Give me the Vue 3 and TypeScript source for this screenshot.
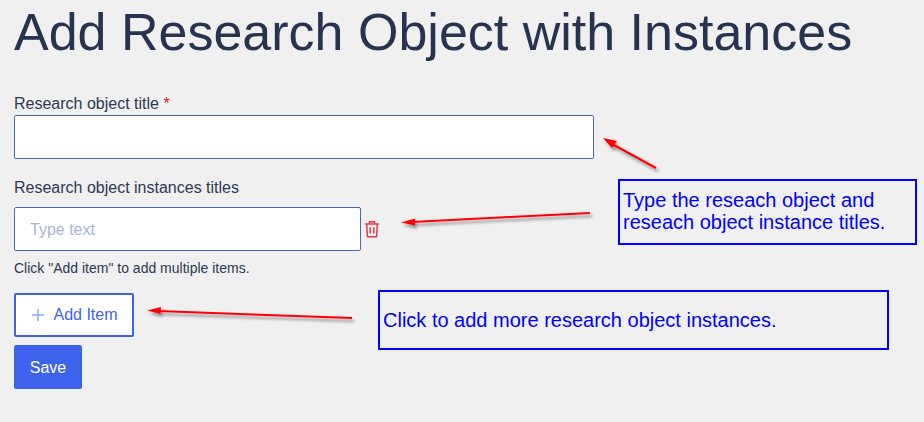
<script setup lang="ts">
const arrows = [
  { id: 1, d: 'M656 168 L612 144', head: '603,138 617,141 612,148' },
  { id: 2, d: 'M590 213 L412 222', head: '401,222.5 415,218.5 415,225.5' },
  { id: 3, d: 'M352 318 L158 311', head: '147,310.5 161,307 160.5,314' },
]
</script>

<template>
  <main class="page">
    <h1 class="title">Add Research Object with Instances</h1>
    <form class="form" @submit.prevent>
      <label class="label first" for="ro-title">Research object title <span class="req">*</span></label>
      <input id="ro-title" class="input wide" type="text" />
      <label class="label second" for="ro-inst">Research object instances titles</label>
      <div class="row">
        <input id="ro-inst" class="input narrow" type="text" placeholder="Type text" />
        <button class="trash" type="button" aria-label="Delete item">
          <svg width="16" height="18" viewBox="0 0 16 18" fill="none" stroke="#e0344a" stroke-width="1.4">
            <path d="M1 4H15" />
            <path d="M5.5 4V1.7H10.5V4" />
            <path d="M2.7 4L3.4 16.8H12.6L13.3 4" />
            <path d="M6.2 7.2V13.6M9.8 7.2V13.6" />
          </svg>
        </button>
      </div>
      <p class="help">Click "Add item" to add multiple items.</p>
      <button class="add" type="button">
        <svg class="plus" width="14" height="14" viewBox="0 0 14 14" stroke="#8ea5f5" stroke-width="1.4">
          <path d="M7 1V13M1 7H13" />
        </svg>
        <span>Add Item</span>
      </button>
      <button class="save" type="submit">Save</button>
    </form>

    <svg class="arrows" width="924" height="422" viewBox="0 0 924 422" aria-hidden="true">
      <defs>
        <filter id="shade" x="-20%" y="-50%" width="140%" height="200%">
          <feDropShadow dx="2" dy="3" stdDeviation="1.5" flood-color="#000" flood-opacity="0.4" />
        </filter>
      </defs>
      <g v-for="a in arrows" :key="a.id" filter="url(#shade)">
        <path :d="a.d" stroke="#ff0000" stroke-width="2" fill="none" />
        <polygon :points="a.head" fill="#ff0000" />
      </g>
    </svg>

    <div class="note note-a">Type the reseach object and<br />reseach object instance titles.</div>
    <div class="note note-b">Click to add more research object instances.</div>
  </main>
</template>

<style scoped>
.page {
  position: relative;
  box-sizing: border-box;
  width: 924px;
  height: 422px;
  overflow: hidden;
  padding: 0 0 0 14px;
  background: #f0f0f0;
  font-family: "Liberation Sans", Arial, sans-serif;
  color: #2a3650;
}
.title {
  margin: 0;
  padding-top: 4px;
  font-size: 52px;
  line-height: 56px;
  font-weight: 400;
  color: #27334f;
}
.form {
  display: flex;
  flex-direction: column;
  align-items: flex-start;
  margin-top: 35px;
}
.label {
  display: block;
  font-size: 16px;
  line-height: 18px;
  color: #2d3850;
}
.second {
  margin-top: 20px;
  margin-bottom: 10px;
}
.first {
  margin-bottom: 2px;
}
.req {
  color: #e0152c;
}
.input {
  box-sizing: border-box;
  height: 44px;
  padding: 2px 15px 0;
  border: 1px solid #4a69ad;
  border-radius: 2px;
  background: #fff;
  font: 16px "Liberation Sans", Arial, sans-serif;
  outline: none;
}
.input::placeholder {
  color: #a8b5d6;
  opacity: 1;
}
.wide {
  width: 580px;
}
.narrow {
  width: 347px;
}
.row {
  display: flex;
  align-items: center;
}
.trash {
  display: flex;
  margin: 0 0 0 3px;
  padding: 0;
  border: 0;
  background: none;
}
.help {
  margin: 9px 0 0;
  font-size: 14px;
  line-height: 16px;
  color: #2d3850;
}
.add {
  box-sizing: border-box;
  display: flex;
  align-items: center;
  justify-content: center;
  gap: 8px;
  width: 120px;
  height: 44px;
  margin-top: 17px;
  padding: 0 0 0 1px;
  border: 2px solid #3d63ed;
  border-radius: 2px;
  background: #fff;
  color: #3d63ed;
  font: 16px "Liberation Sans", Arial, sans-serif;
}
.save {
  width: 68px;
  height: 44px;
  margin-top: 8px;
  padding: 1px 0 0;
  border: 0;
  border-radius: 2px;
  background: #3d63ed;
  color: #fff;
  font: 16px "Liberation Sans", Arial, sans-serif;
}
.arrows {
  position: absolute;
  left: 0;
  top: 0;
  pointer-events: none;
}
.note {
  position: absolute;
  box-sizing: border-box;
  border: 2px solid #0000ff;
  color: #0000ff;
  font-size: 20px;
  line-height: 22px;
}
.note-a {
  left: 618px;
  top: 179px;
  width: 299px;
  height: 66px;
  padding: 8px 0 0 3px;
}
.note-b {
  left: 378px;
  top: 290px;
  width: 511px;
  height: 60px;
  padding: 17px 0 0 3px;
}
</style>
